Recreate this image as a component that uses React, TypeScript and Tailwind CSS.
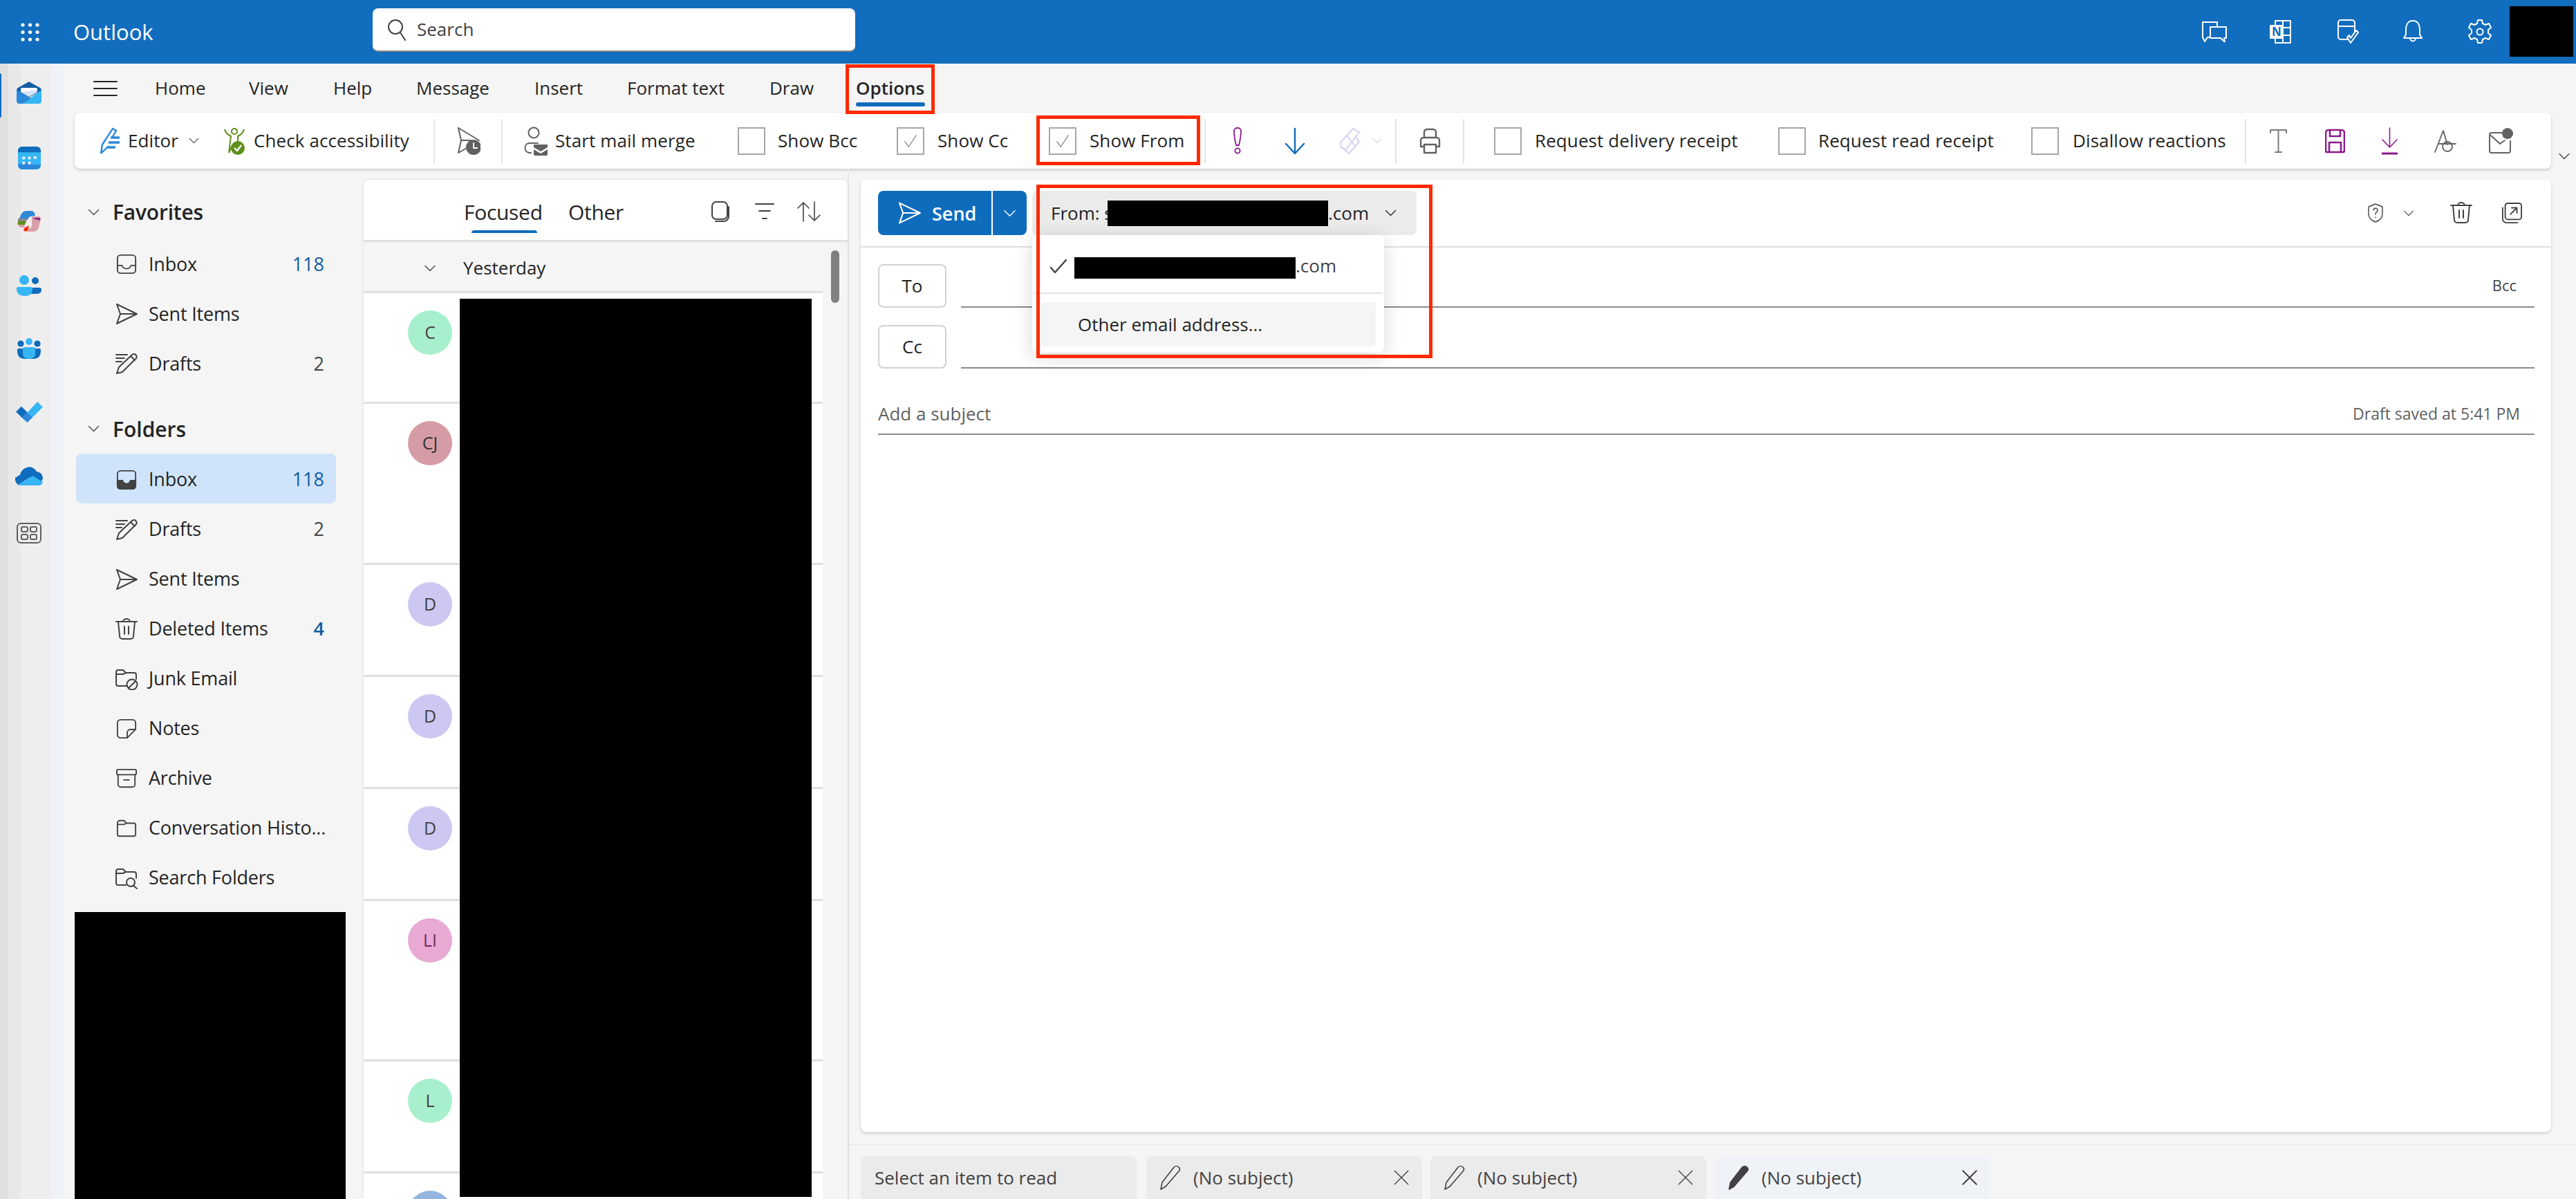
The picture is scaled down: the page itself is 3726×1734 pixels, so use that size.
import type { ReactNode } from "react";

// 32-unit stroke icon, size and colour come from className
function Ico({ className, children, sw = 2, vb = "0 0 32 32" }: { className: string; children: ReactNode; sw?: number; vb?: string }) {
  return (
    <svg viewBox={vb} fill="none" stroke="currentColor" strokeWidth={sw} strokeLinecap="round" strokeLinejoin="round" className={`shrink-0 block ${className}`}>
      {children}
    </svg>
  );
}

const Chevron = ({ className }: { className: string }) => (
  <Ico className={className} vb="0 0 16 10" sw={1.3}><path d="M1 1.5 8 8.5 15 1.5" /></Ico>
);

const Divider = ({ className }: { className: string }) => <div className={`h-[64px] w-[2px] shrink-0 bg-[#e3e3e3] ${className}`} />;

const Check = ({ className, on }: { className: string; on?: boolean }) => (
  <div className={`flex h-[40px] w-[40px] shrink-0 items-center justify-center border-[2px] border-[#a6a6a6] bg-white ${className}`}>
    {on && (
      <Ico className="h-[22px] w-[22px] text-[#424242]" sw={1.4}><path d="M4 17 12 28 28 4" /></Ico>
    )}
  </div>
);

const InboxOutline = (
  <Ico className="h-[30px] w-[30px]"><rect x="2" y="2" width="28" height="28" rx="5" /><path d="M2 18h7c1 4 4 5 7 5s6-1 7-5h7" /></Ico>
);
const InboxFilled = (
  <Ico className="h-[30px] w-[30px]">
    <rect x="2" y="2" width="28" height="28" rx="5" />
    <path fill="currentColor" d="M2 17h8c1 4 3 5 6 5s5-1 6-5h8v8a5 5 0 0 1-5 5H7a5 5 0 0 1-5-5z" />
  </Ico>
);
const SendIco = (
  <Ico className="h-[32px] w-[32px]"><path d="M2 2 31 16 2 30 7 16zM7 16h24" /></Ico>
);
const DraftIco = (
  <Ico className="h-[32px] w-[32px]"><path d="M1 3h16M1 8h12M1 13h8M2 30l3-9L24 3c3-2 5-1 6 1s1 4-1 5L10 28zM22 5l6 6" /></Ico>
);
const TrashIco = (
  <Ico className="h-[32px] w-[32px]"><path d="M1 5h30M11 5a5 4 0 0 1 10 0M4 5l2 21a4 4 0 0 0 4 4h12a4 4 0 0 0 4-4l2-21M13 12v11M19 12v11" /></Ico>
);
const folderPath = "M2 8a4 4 0 0 1 4-4h6l4 4h11a3 3 0 0 1 3 3v14a3 3 0 0 1-3 3H5a3 3 0 0 1-3-3zM2 10h10l4-2";
const JunkIco = (
  <Ico className="h-[32px] w-[34px]" vb="0 0 34 32">
    <path d="M18 26H5a3 3 0 0 1-3-3V6a3 3 0 0 1 3-3h7l4 4h12a3 3 0 0 1 3 3v6M2 9h10l4-2" />
    <circle cx="25" cy="24" r="7.5" /><path d="M20 29 30 19" />
  </Ico>
);
const NotesIco = (
  <Ico className="h-[30px] w-[30px]"><path d="M2 7a5 5 0 0 1 5-5h18a5 5 0 0 1 5 5v10L17 30H7a5 5 0 0 1-5-5zM17 30v-8a5 5 0 0 1 5-5h8" /></Ico>
);
const ArchiveIco = (
  <Ico className="h-[30px] w-[32px]"><rect x="1" y="2" width="30" height="8" rx="2" /><path d="M3 10v15a4 4 0 0 0 4 4h18a4 4 0 0 0 4-4V10M12 18h8" /></Ico>
);
const FolderIco = (
  <Ico className="h-[30px] w-[32px]"><path d={folderPath} /></Ico>
);
const SearchFolderIco = (
  <Ico className="h-[32px] w-[34px]" vb="0 0 34 32">
    <path d="M16 26H5a3 3 0 0 1-3-3V6a3 3 0 0 1 3-3h7l4 4h12a3 3 0 0 1 3 3v6M2 9h10l4-2" />
    <circle cx="23" cy="22" r="6" /><path d="M27 27l5 4" />
  </Ico>
);

const favorites = [
  { icon: InboxOutline, label: "Inbox", count: "118", blue: true },
  { icon: SendIco, label: "Sent Items" },
  { icon: DraftIco, label: "Drafts", count: "2" },
];

const folders = [
  { icon: InboxFilled, label: "Inbox", count: "118", blue: true, selected: true },
  { icon: DraftIco, label: "Drafts", count: "2" },
  { icon: SendIco, label: "Sent Items" },
  { icon: TrashIco, label: "Deleted Items", count: "4", blue: true },
  { icon: JunkIco, label: "Junk Email" },
  { icon: NotesIco, label: "Notes" },
  { icon: ArchiveIco, label: "Archive" },
  { icon: FolderIco, label: "Conversation Histo..." },
  { icon: SearchFolderIco, label: "Search Folders" },
];

const rows = [
  { h: "h-[160px]", init: "C", bg: "bg-[#a8f0cd]", fg: "text-[#424242]" },
  { h: "h-[233px]", init: "CJ", bg: "bg-[#d69ca5]", fg: "text-[#333333]" },
  { h: "h-[162px]", init: "D", bg: "bg-[#cdc8f2]", fg: "text-[#424242]" },
  { h: "h-[162px]", init: "D", bg: "bg-[#cdc8f2]", fg: "text-[#424242]" },
  { h: "h-[162px]", init: "D", bg: "bg-[#cdc8f2]", fg: "text-[#424242]" },
  { h: "h-[232px]", init: "LI", bg: "bg-[#e8a9d2]", fg: "text-[#6b2c63]" },
  { h: "h-[162px]", init: "L", bg: "bg-[#a8f0cd]", fg: "text-[#424242]" },
  { h: "h-[162px]", init: "", bg: "bg-[#94b6de]", fg: "text-[#424242]" },
];

const ribbonTabs = [
  { label: "Home", cls: "ml-[54px] w-[73px]" },
  { label: "View", cls: "ml-[63px] w-[59px]" },
  { label: "Help", cls: "ml-[63px] w-[57px]" },
  { label: "Message", cls: "ml-[63px] w-[107px]" },
  { label: "Insert", cls: "ml-[64px] w-[70px]" },
  { label: "Format text", cls: "ml-[64px] w-[141px]" },
  { label: "Draw", cls: "ml-[65px] w-[63px]" },
];

function Rail() {
  return (
    <div className="relative flex h-full w-[92px] shrink-0 flex-col bg-[linear-gradient(to_right,#e0e0e0_12px,#e8e8e8_12px,#e8e8e8_30px,#eeeeee_30px,#eeeeee_74px,#eff3f7_74px)]">
      <div className="absolute left-0 top-[14px] h-[64px] w-[2px] rounded-r bg-[#0f6cbd]" />
      <div className="flex w-[84px] flex-col items-center pt-[26px]">
        <svg viewBox="0 0 36 32" className="block h-[32px] w-[36px]">
          <path fill="#115ea3" d="M18 0 34 9q2 1 2 4L18 23 0 13q0-3 2-4z" />
          <path fill="#ffffff" d="M6 11q0-2 2-2h20q2 0 2 2v4L18 22 6 15z" />
          <path fill="#d5e3f7" d="M6 15 30 12v3L18 22z" />
          <path fill="#36b6f5" d="M36 12v16q0 4-4 4H9z" />
          <path fill="#2b88d8" d="M0 12 21 24 9 32H4q-4 0-4-4z" />
        </svg>
        <svg viewBox="0 0 32 32" className="mt-[62px] block h-[33px] w-[33px]">
          <rect width="32" height="32" rx="6" fill="#36b6f5" />
          <path fill="#0f6cbd" d="M0 8V6a6 6 0 0 1 6-6h20a6 6 0 0 1 6 6v2z" />
          <path fill="#2b88d8" d="M0 26q8-6 14-3t18 2v1a6 6 0 0 1-6 6H6a6 6 0 0 1-6-6z" />
          <g fill="#e3ecf7"><circle cx="8" cy="16" r="2.2" /><circle cx="16" cy="16" r="2.2" /><circle cx="24" cy="15.5" r="2.2" /><circle cx="8" cy="23" r="2.2" /><circle cx="16" cy="23" r="2.2" /></g>
        </svg>
        <svg viewBox="0 0 34 30" className="mt-[60px] block h-[30px] w-[34px]">
          <path fill="#2b88d8" d="M4 9Q6 1 12 0h9q4 1 5 7l-7 1q-3 1-4 5H1z" />
          <path fill="#888888" d="M1 11h13l-1 4H1z" />
          <path fill="#5f8f1c" d="M1 15h12l-2 5H1q-1-2 0-5z" />
          <path fill="#dba0a8" d="M21 8h10q3 0 3 4l-3 12q-2 6-8 6h-7q-4 0-6-4l8-1q3-1 3-5z" />
          <path fill="#dba0a8" d="M1 20h10l-1 4Q3 25 1 20z" />
          <path fill="#8a2b8a" d="M23 10h10v4l-8-2z" />
          <path fill="#ff2a00" d="M9 27l2-3 6-3-2 7-3 2q-3-1-3-3z" />
        </svg>
        <svg viewBox="0 0 36 30" className="mt-[63px] block h-[30px] w-[36px]">
          <circle cx="27" cy="8" r="5" fill="#0f6cbd" />
          <path fill="#0f6cbd" d="M20 18h13q3 0 3 3 0 6-8 6h-8z" />
          <circle cx="11" cy="7" r="7" fill="#36b6f5" />
          <path fill="#36b6f5" d="M3 17h17q3 0 3 3 0 10-11 10Q0 30 0 20q0-3 3-3z" />
        </svg>
        <svg viewBox="0 0 34 30" className="mt-[61px] block h-[30px] w-[34px]">
          <circle cx="5" cy="8" r="4.6" fill="#0f6cbd" /><circle cx="29" cy="8" r="4.6" fill="#0f6cbd" />
          <circle cx="17" cy="5" r="5" fill="#36b6f5" />
          <path fill="#0f6cbd" d="M2 15h30q2 0 2 3 0 12-11 12H11Q0 30 0 18q0-3 2-3z" />
          <path fill="#36b6f5" d="M10 13h14q2 0 2 2v7q0 8-9 8t-9-8v-7q0-2 2-2z" />
        </svg>
        <svg viewBox="0 0 40 32" className="mt-[61px] block h-[31px] w-[39px]">
          <path fill="#0f6cbd" d="M0 16 8 8l9 9-8 8z" />
          <path fill="#2b88d8" d="M9 25l8-8 8 7-8 8z" />
          <path fill="#36b6f5" d="M17 17 32 1l8 8-15 15z" />
        </svg>
        <svg viewBox="0 0 40 27" className="mt-[64px] block h-[27px] w-[40px]">
          <path fill="#0f6cbd" d="M7 12q1-8 10-11 8-3 14 6 8 1 9 9 0 3-3 6L15 14z" />
          <path fill="#36b6f5" d="M7 27h28q3 0 5-5L25 13 4 26q1 1 3 1z" />
          <path fill="#0f6cbd" d="M8 11 0 16q-1 6 4 10l21-13z" />
        </svg>
        <Ico className="mt-[54px] h-[30px] w-[36px] text-[#616161]" vb="0 0 36 30" sw={2}>
          <rect x="1" y="1" width="34" height="28" rx="5" />
          <rect x="7" y="6" width="9" height="7" rx="2" /><rect x="20" y="6" width="9" height="7" rx="2" />
          <rect x="7" y="17" width="9" height="7" rx="2" /><rect x="20" y="17" width="9" height="7" rx="2" />
        </Ico>
      </div>
    </div>
  );
}

function FolderRow({ item }: { item: { icon: ReactNode; label: string; count?: string; blue?: boolean; selected?: boolean } }) {
  return (
    <div className={`flex h-[72px] w-[376px] items-center rounded-[8px] pl-[56px] pr-[17px] text-[#424242] ${item.selected ? "bg-[#cfe4fa]" : ""}`}>
      <div className="flex w-[33px] shrink-0 justify-center">{item.icon}</div>
      <span className={`ml-[16px] flex-1 whitespace-nowrap text-[27px] tracking-[-0.2px] text-[#242424] ${item.selected ? "font-medium" : ""}`}>{item.label}</span>
      {item.count && <span className={`text-[27px] ${item.blue ? "text-[#115ea3]" : "text-[#424242]"} ${item.count === "4" ? "font-semibold" : ""}`}>{item.count}</span>}
    </div>
  );
}

function FolderPane() {
  return (
    <div className="relative h-full w-[434px] shrink-0 pl-[18px] pt-[36px]">
      <div className="flex h-[56px] items-center pb-[3px] pl-[17px]">
        <Chevron className="h-[10px] w-[17px] text-[#424242]" />
        <span className="ml-[19px] text-[30px] font-semibold tracking-[-0.2px] text-[#242424]">Favorites</span>
      </div>
      <div className="mt-[10px]">{favorites.map((f) => <FolderRow key={f.label} item={f} />)}</div>
      <div className="mt-[30px] flex h-[56px] items-center pl-[17px]">
        <Chevron className="h-[10px] w-[17px] text-[#424242]" />
        <span className="ml-[19px] text-[30px] font-semibold text-[#242424]">Folders</span>
      </div>
      <div className="mt-[8px] [&>div]:pt-[3px]">{folders.map((f) => <FolderRow key={f.label} item={f} />)}</div>
      <div className="absolute left-[16px] top-[1075px] h-[415px] w-[392px] bg-black" />
    </div>
  );
}

function MailList() {
  return (
    <div className="relative mt-[16px] flex w-[700px] shrink-0 flex-col rounded-t-[8px] bg-white shadow-[0_0_4px_rgba(0,0,0,0.1)]">
      <div className="flex h-[90px] shrink-0 items-center border-b-[3px] border-[#e0e0e0] pt-[5px] text-[#242424]">
        <div className="relative ml-[145px] flex h-full w-[117px] items-center">
          <span className="whitespace-nowrap text-[30px] font-medium tracking-[-0.3px]">Focused</span>
          <div className="absolute bottom-[10px] left-[11px] h-[4px] w-[95px] rounded-t bg-[#0f6cbd]" />
        </div>
        <span className="ml-[34px] w-[80px] whitespace-nowrap text-[30px] tracking-[-0.3px]">Other</span>
        <Ico className="ml-[126px] h-[30px] w-[28px] text-[#424242]" vb="0 0 28 30"><rect x="2" y="1" width="22" height="25" rx="6" /><path d="M26 8v14a7 7 0 0 1-7 7H7" /></Ico>
        <Ico className="ml-[36px] h-[26px] w-[28px] text-[#424242]" vb="0 0 28 26"><path d="M1 2h26M6 12h16M11 23h6" /></Ico>
        <Ico className="ml-[33px] h-[30px] w-[34px] text-[#424242]" vb="0 0 34 30" sw={1.6}><path d="M9 29V2M1 10l8-8 8 8M25 1v27M17 20l8 8 8-8" /></Ico>
      </div>
      <div className="flex min-h-0 flex-1">
        <div className="w-[664px] shrink-0">
          <div className="flex h-[74px] items-center border-b-[3px] border-[#e0e0e0] bg-[#f5f5f5] pl-[86px] pt-[4px]">
            <Chevron className="h-[10px] w-[20px] text-[#424242]" />
            <span className="ml-[38px] text-[26px] font-medium text-[#242424]">Yesterday</span>
          </div>
          {rows.map((r, i) => (
            <div key={i} className={`${r.h} border-b-[3px] border-[#e0e0e0] pl-[64px] pt-[25px]`}>
              <div className={`flex h-[64px] w-[64px] items-center justify-center rounded-full text-[25px] ${r.bg} ${r.fg}`}>{r.init}</div>
            </div>
          ))}
        </div>
        <div className="flex-1 bg-[#f5f5f5] pl-[12px] pt-[12px]">
          <div className="h-[76px] w-[12px] rounded-full bg-[#808080]" />
        </div>
      </div>
      <div className="absolute left-[139px] top-[172px] h-[1299px] w-[509px] bg-black" />
    </div>
  );
}

function AddrRow({ label, bcc, top }: { label: string; bcc?: boolean; top: string }) {
  return (
    <div className={`flex h-[63px] items-stretch ${top}`}>
      <div className="flex w-[99px] shrink-0 items-center justify-center rounded-[8px] border-[2px] border-[#d1d1d1] text-[26px] font-medium text-[#242424]">{label}</div>
      <div className="ml-[21px] flex flex-1 items-center justify-end border-b-[2px] border-[#8a8a8a] pr-[26px]">
        {bcc && <span className="text-[22px] text-[#424242]">Bcc</span>}
      </div>
    </div>
  );
}

function Compose() {
  const tabs = [
    { ml: "ml-[14px]", bg: "bg-[#ebebeb]", solid: false },
    { ml: "ml-[12px]", bg: "bg-[#ebebeb]", solid: false },
    { ml: "ml-[12px]", bg: "bg-[#eff3f7]", solid: true },
  ];
  return (
    <div className="flex h-full min-w-0 flex-1 flex-col border-l-[2px] border-[#e8e8e8] pl-[17px]">
      <div className="mt-[16px] flex h-[1377px] w-[2445px] shrink-0 flex-col rounded-[8px] bg-white shadow-[0_2px_4px_rgba(0,0,0,0.16)]">
        <div className="flex h-[98px] shrink-0 items-start border-b-[2px] border-[#e0e0e0] pl-[25px] pt-[16px]">
          <div className="flex h-[64px] w-[215px] shrink-0 rounded-[8px] bg-[#0f6cbd] text-white">
            <div className="flex w-[166px] items-center border-r-[2px] border-white pl-[29px]">
              <Ico className="h-[34px] w-[33px]"><path d="M2 2 31 16 2 30 7 16zM7 16h24" /></Ico>
              <span className="ml-[16px] pt-[2px] text-[27px] font-semibold">Send</span>
            </div>
            <div className="flex flex-1 items-center justify-center">
              <Chevron className="h-[11px] w-[17px]" />
            </div>
          </div>
          <div className="relative ml-[8px] flex h-[64px] w-[556px] shrink-0 items-center rounded-[8px] bg-[#ebebeb] pl-[27px] text-[#242424]">
            <span className="w-[82px] whitespace-nowrap text-[26px] font-medium">From: s</span>
            <div className="h-[37px] w-[319px] bg-black" />
            <span className="w-[62px] text-[26px] font-medium">.com</span>
            <Chevron className="ml-[20px] h-[10px] w-[17px] text-[#242424]" />
            <div className="absolute left-0 top-[64px] z-10 h-[170px] w-[509px] rounded-[8px] bg-white pt-[32px] shadow-[0_6px_28px_rgba(0,0,0,0.16)]">
              <div className="flex h-[31px] items-center pl-[25px]">
                <Ico className="mb-[6px] h-[20px] w-[26px] text-[#424242]" vb="0 0 26 20" sw={2.4}><path d="M2 12l6 7L24 1" /></Ico>
                <div className="ml-[10px] h-[31px] w-[320px] bg-black" />
                <span className="mb-[6px] text-[26px] text-[#424242]">.com</span>
              </div>
              <div className="mx-[2px] mt-[20px] h-[2px] bg-[#e0e0e0]" />
              <div className="mx-[12px] mt-[12px] flex h-[64px] items-center rounded-[6px] bg-[#f5f5f5] pl-[54px] text-[26px] text-[#242424]">Other email address...</div>
            </div>
          </div>
          <div className="ml-auto flex h-[64px] items-center pr-[42px]">
            <Ico className="h-[28px] w-[24px] text-[#424242]" vb="0 0 24 28" sw={1.4}><path d="M12 1l10 4v10c0 6-4 10-10 12C6 25 2 21 2 15V5z" /><path d="M9 10a3 3 0 1 1 4 3c-1 1-1 1-1 3M12 20v.5" /></Ico>
            <Chevron className="ml-[29px] h-[9px] w-[14px] text-[#424242]" />
            <Ico className="ml-[53px] h-[34px] w-[32px] text-[#424242]"><path d="M1 5h30M11 5a5 4 0 0 1 10 0M4 5l2 21a4 4 0 0 0 4 4h12a4 4 0 0 0 4-4l2-21M13 12v11M19 12v11" /></Ico>
            <Ico className="ml-[42px] h-[30px] w-[30px] text-[#424242]"><rect x="6" y="1" width="25" height="25" rx="4" /><path d="M2 8v17a6 6 0 0 0 6 6h17M14 18 24 8M16 8h8v8" /></Ico>
          </div>
        </div>
        <div className="pl-[25px] pr-[24px]">
          <AddrRow label="To" bcc top="mt-[24px]" />
          <AddrRow label="Cc" top="mt-[25px]" />
          <div className="mt-[34px] flex h-[62px] items-center justify-between border-b-[2px] border-[#8a8a8a] pt-[2px]">
            <span className="text-[26px] text-[#616161]">Add a subject</span>
            <span className="pr-[21px] text-[23px] text-[#616161]">Draft saved at 5:41 PM</span>
          </div>
        </div>
      </div>
      <div className="mt-[17px] h-[2px] -ml-[17px] shrink-0 bg-[#ebebeb]" />
      <div className="mt-[16px] flex">
        <div className="flex h-[62px] w-[399px] shrink-0 items-center rounded-t-[8px] bg-[#ebebeb] pl-[20px] text-[26px] text-[#424242]">Select an item to read</div>
        {tabs.map((t, i) => (
          <div key={i} className={`flex h-[62px] w-[399px] shrink-0 items-center rounded-t-[8px] pl-[18px] pr-[18px] text-[#424242] ${t.ml} ${t.bg}`}>
            <Ico className="h-[36px] w-[32px]" vb="0 0 32 36" sw={1.6}>
              <path fill={t.solid ? "currentColor" : "none"} d="M3 35l2-10L22 3c2-2 5-2 7 0s2 4 0 6L10 31z" />
            </Ico>
            <span className="ml-[18px] flex-1 whitespace-nowrap text-[26px]">(No subject)</span>
            <Ico className="h-[24px] w-[24px]" sw={t.solid ? 2.6 : 1.8}><path d="M3 3l26 26M29 3 3 29" /></Ico>
          </div>
        ))}
      </div>
    </div>
  );
}

export default function App() {
  return (
    <div className="relative flex h-[1734px] w-[3726px] flex-col overflow-hidden bg-[#f5f5f5] font-['Open_Sans',sans-serif]">
      <header className="flex h-[92px] shrink-0 items-center bg-[#116dbe] text-white">
        <svg viewBox="0 0 27 27" className="ml-[30px] block h-[29px] w-[27px] fill-white">
          {[3, 13.5, 24].map((y) => [3, 13.5, 24].map((x) => <circle key={`${x}-${y}`} cx={x} cy={y} r="2.6" />))}
        </svg>
        <span className="ml-[49px] w-[118px] text-[31px] font-medium">Outlook</span>
        <div className="ml-[315px] flex h-[63px] w-[698px] shrink-0 items-center self-start mt-[12px] rounded-[8px] border-b-[2px] border-[#8a8a8a] bg-white pl-[21px] text-[#424242]">
          <Ico className="h-[32px] w-[28px]" vb="0 0 28 32"><circle cx="12" cy="12" r="10" /><path d="M19 20l7 11" /></Ico>
          <span className="ml-[15px] text-[26px]">Search</span>
        </div>
        <Ico className="ml-[1948px] h-[30px] w-[36px]" vb="0 0 36 30"><path d="M22 7V1H1v22l3 6 4-6h3M12 8h23v16h-3l1 6-6-6H12z" /></Ico>
        <Ico className="ml-[61px] h-[34px] w-[32px]" vb="0 0 32 34">
          <path d="M9 1h22v32H9zM20 1v32M20 11h11M20 22h11" />
          <rect x="1" y="7" width="20" height="20" rx="1" fill="white" stroke="none" />
          <text x="11" y="23" textAnchor="middle" fontSize="17" fontWeight="700" fill="#116dbe" stroke="none">N</text>
        </Ico>
        <Ico className="ml-[66px] h-[36px] w-[32px]" vb="0 0 32 36"><path d="M15 29H6a4 4 0 0 1-4-4V5a4 4 0 0 1 4-4h16a4 4 0 0 1 4 4v13M2 10h24M15 26l5 8 11-15-3-3-8 11-2-4z" /></Ico>
        <Ico className="ml-[64px] h-[34px] w-[28px]" vb="0 0 28 34"><path d="M14 1C7 1 4 7 4 13v8l-3 5h26l-3-5v-8c0-6-3-12-10-12zM10 26c0 6 8 6 8 0" /></Ico>
        <Ico className="ml-[66px] h-[36px] w-[34px]" vb="0 0 34 36"><path d="M14 1h6l1 5 4 2 5-2 3 6-4 3v5l4 3-3 6-5-2-4 2-1 5h-6l-1-5-4-2-5 2-3-6 4-3v-5L1 12l3-6 5 2 4-2z" /><circle cx="17" cy="18" r="4.5" /></Ico>
        <div className="ml-[26px] h-[73px] w-[92px] shrink-0 self-start mt-[9px] bg-black" />
      </header>
      <div className="flex min-h-0 flex-1">
        <Rail />
        <div className="flex min-w-0 flex-1 flex-col">
          <div className="flex h-[71px] shrink-0 items-center pl-[43px] text-[#242424]">
            <Ico className="h-[24px] w-[35px]" vb="0 0 35 24"><path d="M1 2h33M1 12h33M1 22h33" /></Ico>
            {ribbonTabs.map((t) => (
              <span key={t.label} className={`whitespace-nowrap text-[26px] ${t.cls}`}>{t.label}</span>
            ))}
            <div className="relative ml-[62px] flex h-full w-[100px] items-center">
              <span className="whitespace-nowrap text-[26px] font-semibold">Options</span>
              <div className="absolute bottom-[9px] left-0 h-[6px] w-[100px] rounded-full bg-[#0f6cbd]" />
            </div>
          </div>
          <div className="ml-[16px] flex h-[81px] w-[3582px] shrink-0 items-center rounded-[8px] bg-white pl-[35px] text-[26px] tracking-[0.1px] text-[#242424] shadow-[0_2px_4px_rgba(0,0,0,0.18)] [&>span]:shrink-0 [&>span]:whitespace-nowrap">
            <svg viewBox="0 0 32 40" className="block h-[40px] w-[32px] shrink-0">
              <path fill="none" stroke="#2b88d8" strokeWidth="2.4" d="M3 38l2-13L20 2l5 3-6 10M3 38l8-8" />
              <path stroke="#2b88d8" strokeWidth="3.4" d="M17 15h13M14 22h16M11 29h13" />
            </svg>
            <span className="ml-[10px] w-[73px]">Editor</span>
            <Chevron className="ml-[15px] h-[9px] w-[15px] text-[#424242]" />
            <svg viewBox="0 0 32 40" className="ml-[35px] block h-[40px] w-[32px] shrink-0">
              <circle cx="16" cy="6" r="4" fill="none" stroke="#5f8f1c" strokeWidth="2" />
              <path fill="none" stroke="#5f8f1c" strokeWidth="2" d="M2 3c1 6 7 9 9 10l-3 24 5-11M30 3c-1 6-7 9-9 10v7" />
              <circle cx="21" cy="30" r="10" fill="#5f8f1c" />
              <path fill="none" stroke="white" strokeWidth="2.4" d="M16 30l4 4 6-8" />
            </svg>
            <span className="ml-[12px] w-[228px]">Check accessibility</span>
            <Divider className="ml-[32px]" />
            <Ico className="ml-[31px] h-[42px] w-[35px] text-[#616161]" vb="0 0 35 42"><path d="M3 2l30 18M3 2l4 18-4 18 12-7M7 20h14" /><circle cx="25" cy="30" r="10" fill="currentColor" /><path d="M25 24v7h5" stroke="white" /></Ico>
            <Divider className="ml-[30px]" />
            <Ico className="ml-[30px] h-[42px] w-[36px] text-[#616161]" vb="0 0 36 42"><circle cx="15" cy="9" r="7.5" /><path d="M11 38H8c-8-2-7-14 1-14h12" /><path fill="currentColor" d="M15 26h20v4l-10 6-10-6zM15 33l10 6 10-6v7a2 2 0 0 1-2 2H17a2 2 0 0 1-2-2z" stroke="none" /></Ico>
            <span className="ml-[10px] w-[204px]">Start mail merge</span>
            <Check className="ml-[60px]" />
            <span className="ml-[18px] w-[118px]">Show Bcc</span>
            <Check className="ml-[54px]" on />
            <span className="ml-[19px] w-[104px]">Show Cc</span>
            <Check className="ml-[57px]" on />
            <span className="ml-[19px] w-[137px]">Show From</span>
            <Divider className="ml-[29px]" />
            <Ico className="ml-[39px] h-[40px] w-[14px] text-[#8a1a8a]" vb="0 0 14 40" sw={1.8}><path d="M2 5a5 4 0 0 1 10 0c0 8-2 17-3 21H5C4 22 2 13 2 5z" /><circle cx="7" cy="34" r="3.6" /></Ico>
            <Ico className="ml-[61px] h-[40px] w-[30px] text-[#0f6cbd]" vb="0 0 30 40" sw={2.4}><path d="M15 2v36M2 24l13 14 13-14" /></Ico>
            <Ico className="ml-[47px] h-[40px] w-[35px] text-[#d2d2f5]" vb="0 0 35 40" sw={2}><path d="M4 22 22 2l9 5-20 26-7-5zM13 12l11 14M8 30l8 8 15-17-5-7" /></Ico>
            <Chevron className="ml-[15px] h-[9px] w-[13px] text-[#d1d1d1]" />
            <Divider className="ml-[20px]" />
            <Ico className="ml-[32px] h-[38px] w-[33px] text-[#616161]" vb="0 0 33 38" sw={2.4}><path d="M8 14V6a4 4 0 0 1 4-4h9a4 4 0 0 1 4 4v8M3 27V18a4 4 0 0 1 4-4h19a4 4 0 0 1 4 4v9h-5M8 27H3M8 24h17v12H8z" /></Ico>
            <Divider className="ml-[31px]" />
            <Check className="ml-[43px]" />
            <span className="ml-[19px] w-[295px]">Request delivery receipt</span>
            <Check className="ml-[57px]" />
            <span className="ml-[18px] w-[252px]">Request read receipt</span>
            <Check className="ml-[56px]" />
            <span className="ml-[20px] w-[220px]">Disallow reactions</span>
            <Divider className="ml-[29px]" />
            <Ico className="ml-[34px] h-[36px] w-[25px] text-[#7a7a7a]" vb="0 0 25 36" sw={2}><path d="M1 6V2h23v4M12.5 2v32M8 34h9" /></Ico>
            <Ico className="ml-[55px] h-[36px] w-[29px] text-[#8a1a8a]" vb="0 0 29 36" sw={2.6}><path d="M5 2h19a4 4 0 0 1 4 4v26a2 2 0 0 1-2 2H3a2 2 0 0 1-2-2V6a4 4 0 0 1 4-4zM7 2v9h15V2M6 34V20h17v14" /></Ico>
            <Ico className="ml-[53px] h-[40px] w-[23px] text-[#8a1a8a]" vb="0 0 23 40" sw={1.6}><path d="M11.5 1v28M1 18l10.5 11L22 18" /><path d="M0 38h23" strokeWidth="3" /></Ico>
            <Ico className="ml-[52px] h-[36px] w-[33px] text-[#616161]" vb="0 0 33 36" sw={1.8}><path d="M2 34 14 3l6 20M8 22h24" /><circle cx="20" cy="26" r="7" /></Ico>
            <Ico className="ml-[47px] h-[40px] w-[35px] text-[#616161]" vb="0 0 35 40" sw={2}><path d="M19 8H4a3 3 0 0 0-3 3v23a3 3 0 0 0 3 3h24a3 3 0 0 0 3-3V20M3 12l13 12 7-5" /><circle cx="27" cy="9" r="7" fill="currentColor" strokeDasharray="3 2" /></Ico>
            <div className="relative ml-[65px] h-[9px] w-[18px] shrink-0 translate-y-[22px]">
              <Chevron className="h-[10px] w-[18px] text-[#424242]" />
            </div>
          </div>
          <div className="flex min-h-0 flex-1">
            <FolderPane />
            <MailList />
            <Compose />
          </div>
        </div>
      </div>
      <div className="absolute left-[1223px] top-[93px] h-[72px] w-[129px] border-[5px] border-[#ff2a00]" />
      <div className="absolute left-[1499px] top-[167px] h-[72px] w-[237px] border-[5px] border-[#ff2a00]" />
      <div className="absolute left-[1499px] top-[267px] z-20 h-[251px] w-[573px] border-[5px] border-[#ff2a00]" />
    </div>
  );
}
